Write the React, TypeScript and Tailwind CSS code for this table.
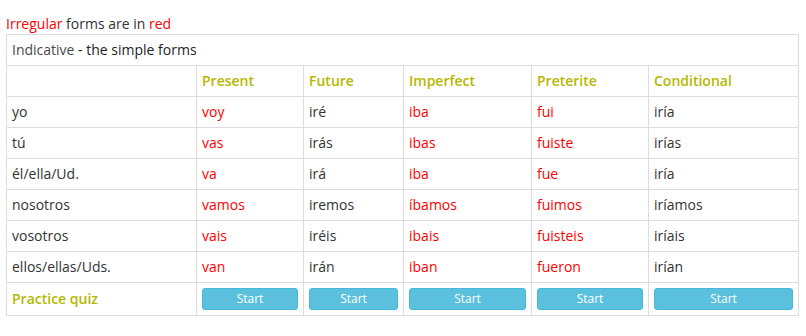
import React from "react";

const RED = "text-[#ff0000]";
const tenses = ["Present", "Future", "Imperfect", "Preterite", "Conditional"];
const rows: { p: string; f: string[]; irr: boolean[] }[] = [
  { p: "yo", f: ["voy", "iré", "iba", "fui", "iría"], irr: [true, false, true, true, false] },
  { p: "tú", f: ["vas", "irás", "ibas", "fuiste", "irías"], irr: [true, false, true, true, false] },
  { p: "él/ella/Ud.", f: ["va", "irá", "iba", "fue", "iría"], irr: [true, false, true, true, false] },
  { p: "nosotros", f: ["vamos", "iremos", "íbamos", "fuimos", "iríamos"], irr: [true, false, true, true, false] },
  { p: "vosotros", f: ["vais", "iréis", "ibais", "fuisteis", "iríais"], irr: [true, false, true, true, false] },
  { p: "ellos/ellas/Uds.", f: ["van", "irán", "iban", "fueron", "irían"], irr: [true, false, true, true, false] },
];

const cell = "border-r border-b border-[#dddddd] px-[5px] flex items-center h-[31px]";

export default function App() {
  return (
    <div
      className="bg-white w-[806px] h-[336px] px-[6px] pt-[14px] text-[14px] leading-[20px] text-[#333333]"
      style={{ fontFamily: "'Open Sans', 'Noto Sans', sans-serif" }}
    >
      <div>
        <span className={RED}>Irregular</span> forms are in <span className={RED}>red</span>
      </div>
      <div className="w-[793px] border-l border-t border-[#dddddd] grid grid-cols-[190px_107px_100px_128px_117px_150px]">
        <div className={`${cell} col-span-6`}>
          <span className="text-[#4a4a4a]">Indicative</span>
          <span className="text-[#222222] whitespace-pre"> - the simple forms</span>
        </div>
        <div className={cell}></div>
        {tenses.map((t) => (
          <div key={t} className={`${cell} font-semibold text-[#b5b800]`}>
            {t}
          </div>
        ))}
        {rows.map((r) => (
          <React.Fragment key={r.p}>
            <div className={cell}>{r.p}</div>
            {r.f.map((f, i) => (
              <div key={i} className={`${cell} ${r.irr[i] ? RED : ""}`}>
                {f}
              </div>
            ))}
          </React.Fragment>
        ))}
        <div className={`${cell} !h-[33px] font-semibold text-[#b5b800]`}>Practice quiz</div>
        {tenses.map((t) => (
          <div key={t} className={`${cell} !h-[33px]`}>
            <button className="w-full h-[22px] rounded-[3px] bg-[#5bc0de] border border-[#46b8da] text-white text-[12px] leading-[18px] flex items-center justify-center">
              Start
            </button>
          </div>
        ))}
      </div>
    </div>
  );
}
